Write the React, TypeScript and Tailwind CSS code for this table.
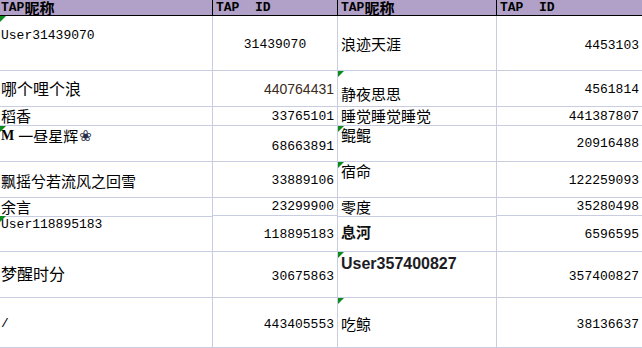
type Kind = "mono" | "cjk" | "cjk16" | "cjkbold" | "sans" | "boldsans" | "mixed";

type Cell = {
  text: string;
  kind: Kind;
  // padding-top class, written out in full so tailwind sees it
  pt: string;
  align?: "left" | "right" | "center";
  flag?: boolean;
};

type Row = { h: string; cells: Cell[] };

const FONT: Record<Kind, string> = {
  mono: "font-['Liberation_Mono',monospace] text-[13px] leading-[16px] text-black",
  cjk: "font-['Noto_Sans_CJK_SC',sans-serif] text-[15px] leading-[18px] text-black",
  cjk16: "font-['Noto_Sans_CJK_SC',sans-serif] text-[16px] leading-[19px] text-black",
  cjkbold: "font-['Noto_Sans_CJK_SC',sans-serif] font-bold text-[15px] leading-[18px] text-[#111]",
  sans: "font-['Liberation_Sans',sans-serif] text-[14px] leading-[17px] text-[#3b2a20]",
  boldsans: "font-['Liberation_Sans',sans-serif] font-bold text-[16px] leading-[19px] text-[#1c1c24]",
  mixed: "font-['Noto_Sans_CJK_SC',sans-serif] text-[15px] leading-[18px] text-black",
};

const ROWS: Row[] = [
  {
    h: "h-[55px]",
    cells: [
      { text: "User31439070", kind: "mono", pt: "pt-[12px]", flag: true },
      { text: "31439070", kind: "mono", pt: "pt-[21px]", align: "center" },
      { text: "浪迹天涯", kind: "cjk", pt: "pt-[19px]" },
      { text: "4453103", kind: "mono", pt: "pt-[22px]", align: "right" },
    ],
  },
  {
    h: "h-[36px]",
    cells: [
      { text: "哪个哩个浪", kind: "cjk16", pt: "pt-[8px]" },
      { text: "440764431", kind: "sans", pt: "pt-[10px]", align: "right" },
      { text: "静夜思思", kind: "cjk", pt: "pt-[14px]", flag: true },
      { text: "4561814", kind: "mono", pt: "pt-[11px]", align: "right" },
    ],
  },
  {
    h: "h-[19px]",
    cells: [
      { text: "稻香", kind: "cjk", pt: "pt-0" },
      { text: "33765101", kind: "mono", pt: "pt-[2px]", align: "right" },
      { text: "睡觉睡觉睡觉", kind: "cjk", pt: "pt-0" },
      { text: "441387807", kind: "mono", pt: "pt-[2px]", align: "right" },
    ],
  },
  {
    h: "h-[36px]",
    cells: [
      { text: "一昼星辉", kind: "mixed", pt: "pt-[1px]", flag: true },
      { text: "68663891", kind: "mono", pt: "pt-[13px]", align: "right" },
      { text: "鲲鲲", kind: "cjk", pt: "pt-0", flag: true },
      { text: "20916488", kind: "mono", pt: "pt-[10px]", align: "right" },
    ],
  },
  {
    h: "h-[36px]",
    cells: [
      { text: "飘摇兮若流风之回雪", kind: "cjk", pt: "pt-[10px]" },
      { text: "33889106", kind: "mono", pt: "pt-[11px]", align: "right" },
      { text: "宿命", kind: "cjk", pt: "pt-0", flag: true },
      { text: "122259093", kind: "mono", pt: "pt-[11px]", align: "right" },
    ],
  },
  {
    h: "h-[18px]",
    cells: [
      { text: "余言", kind: "cjk", pt: "pt-0" },
      { text: "23299900", kind: "mono", pt: "pt-[1px]", align: "right" },
      { text: "零度", kind: "cjk", pt: "pt-0" },
      { text: "35280498", kind: "mono", pt: "pt-[1px]", align: "right" },
    ],
  },
  {
    h: "h-[36px]",
    cells: [
      { text: "User118895183", kind: "mono", pt: "pt-[1px]", flag: true },
      { text: "118895183", kind: "mono", pt: "pt-[11px]", align: "right" },
      { text: "息河", kind: "cjkbold", pt: "pt-[7px]" },
      { text: "6596595", kind: "mono", pt: "pt-[11px]", align: "right" },
    ],
  },
  {
    h: "h-[46px]",
    cells: [
      { text: "梦醒时分", kind: "cjk16", pt: "pt-[12px]" },
      { text: "30675863", kind: "mono", pt: "pt-[17px]", align: "right" },
      { text: "User357400827", kind: "boldsans", pt: "pt-[2px]", flag: true },
      { text: "357400827", kind: "mono", pt: "pt-[17px]", align: "right" },
    ],
  },
  {
    h: "h-[50px]",
    cells: [
      { text: "/", kind: "mono", pt: "pt-[18px]" },
      { text: "443405553", kind: "mono", pt: "pt-[19px]", align: "right" },
      { text: "吃鲸", kind: "cjk", pt: "pt-[17px]", flag: true },
      { text: "38136637", kind: "mono", pt: "pt-[19px]", align: "right" },
    ],
  },
];

// left padding per column (col A is cut off by the screen edge)
const PAD_L = ["pl-[1px]", "pl-[3px]", "pl-[3px]", "pl-[3px]"];

function Flag() {
  return (
    <svg width="6" height="6" viewBox="0 0 6 6" className="absolute left-0 top-0">
      <path d="M0 0H6L0 6Z" fill="#0b8a1d" />
    </svg>
  );
}

function DataCell({ cell, col }: { cell: Cell; col: number }) {
  const justify =
    cell.align === "right" ? "justify-end pr-[3px]" : cell.align === "center" ? "justify-center" : "justify-start " + PAD_L[col];
  return (
    <div
      className={
        "relative flex items-start whitespace-nowrap border-b border-[#c8cde1] " +
        (col < 3 ? "border-r " : "") +
        justify +
        " " +
        cell.pt +
        " " +
        FONT[cell.kind]
      }
    >
      {cell.flag && <Flag />}
      {cell.kind === "mixed" ? (
        <span className="flex items-center">
          <span className="font-['Liberation_Serif',serif] font-bold text-[14px] leading-[18px] mr-[4px] text-black">M</span>
          <span>{cell.text}</span>
          <span className="font-['DejaVu_Sans',sans-serif] text-[15px] leading-[18px] ml-[1px] text-[#2a2f48]">❀</span>
        </span>
      ) : (
        <span>{cell.text}</span>
      )}
    </div>
  );
}

function HeaderCell({ label, col, id }: { label?: string; col: number; id?: boolean }) {
  return (
    <div
      className={
        "h-[16px] flex items-start whitespace-nowrap bg-[#b1a0c7] border-b border-black text-black " +
        (col < 3 ? "border-r " : "") +
        PAD_L[col]
      }
    >
      <span className="font-['Liberation_Mono',monospace] font-bold text-[13px] leading-[15px] whitespace-pre">
        {id ? "TAP  ID" : "TAP"}
      </span>
      {!id && (
        <span className="font-['Noto_Sans_CJK_SC',sans-serif] font-bold text-[15px] leading-[15px]">{label}</span>
      )}
    </div>
  );
}

export default function App() {
  return (
    <div className="w-[642px] h-[348px] overflow-hidden bg-white">
      <div className="grid grid-cols-[213px_125px_159px_145px]">
        <HeaderCell label="昵称" col={0} />
        <HeaderCell col={1} id />
        <HeaderCell label="昵称" col={2} />
        <HeaderCell col={3} id />
        {ROWS.map((row, r) =>
          row.cells.map((cell, c) => (
            <div key={r + "-" + c} className={"grid " + row.h}>
              <DataCell cell={cell} col={c} />
            </div>
          ))
        )}
      </div>
    </div>
  );
}
